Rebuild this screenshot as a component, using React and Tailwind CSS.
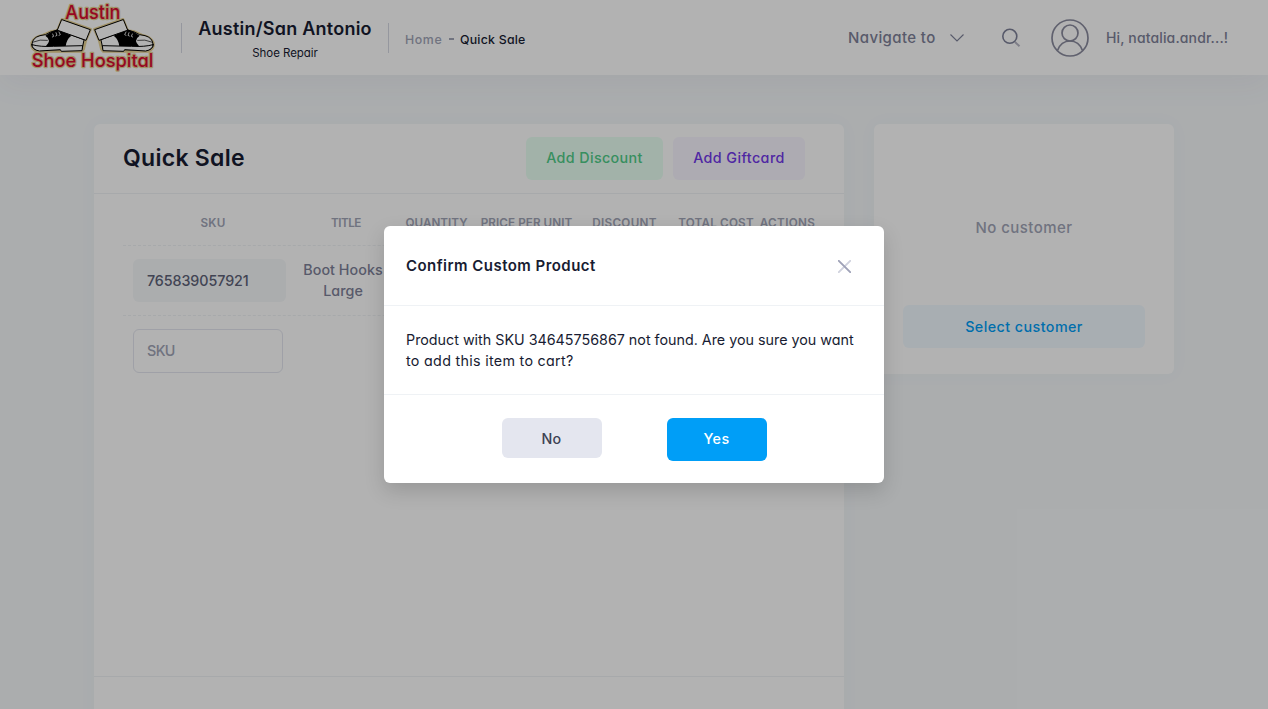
const HEADERS = [
  { label: "SKU", cls: "w-[180px] tracking-[0.2px]" },
  { label: "TITLE", cls: "w-[86px] tracking-[-0.52px]" },
  { label: "QUANTITY", cls: "w-[95px]" },
  { label: "PRICE PER UNIT", cls: "w-[85px] tracking-[0.06px]" },
  { label: "DISCOUNT", cls: "w-[111px] tracking-[0.32px]" },
  { label: "TOTAL COST", cls: "w-[72px] tracking-[0.2px]" },
  { label: "ACTIONS", cls: "w-[71px] tracking-[0.37px]" },
];

function Shoe() {
  return (
    <g strokeLinejoin="round" strokeLinecap="round">
      <path
        d="M126 58 L212 88 L197 122 L191 147 L186 154 L50 154 Q32 146 35 128 Q42 110 70 105 L92 95 L112 92 Z"
        fill="#e6d193"
        stroke="#e6d193"
        strokeWidth="8"
      />
      <path
        d="M112 90 L92 96 Q78 106 60 107 Q38 113 36 132 Q34 146 50 150 L186 148 L192 120 Z"
        fill="#fff"
        stroke="#000"
        strokeWidth="3"
      />
      <path d="M113 88 L92 97 L76 107 Q96 120 78 138 L137 139 Q139 118 154 107 Z" fill="#000" />
      <path d="M36 134 Q60 141 100 139 L188 137 L186 152 L124 154 L121 149 L58 153 Q36 149 36 134 Z" fill="#fff" stroke="#000" strokeWidth="3" />
      <path d="M40 126 Q60 117 82 121" fill="none" stroke="#000" strokeWidth="2" />
      <path d="M126 59 L211 89 L198 121 L113 91 Z" fill="#fff" stroke="#000" strokeWidth="3" />
      <path d="M98 102 l3 7 l-4 2 M108 98 l3 8 l-4 2 M117 96 l4 8 l-4 2" fill="none" stroke="#fff" strokeWidth="2.5" />
    </g>
  );
}

function Logo() {
  return (
    <svg className="h-[75px] w-[161px] shrink-0" viewBox="0 0 483 225">
      <Shoe />
      <g transform="translate(435 0) scale(-1 1)">
        <Shoe />
      </g>
      <g
        fontFamily="Inter, sans-serif"
        fontWeight="500"
        fill="#d80a32"
        stroke="#e6d193"
        strokeWidth="7"
        strokeLinejoin="round"
        paintOrder="stroke"
        style={{ fontFeatureSettings: '"cv11"' }}
      >
        <text x="136" y="56" fontSize="56" textLength="165" lengthAdjust="spacingAndGlyphs">Austin</text>
        <text x="35" y="201" fontSize="55" textLength="365" lengthAdjust="spacingAndGlyphs">Shoe Hospital</text>
      </g>
    </svg>
  );
}

function Header() {
  return (
    <header className="relative flex h-[75px] w-full shrink-0 items-start bg-white pl-5 shadow-[0_10px_30px_0_rgba(82,63,105,0.05)]">
      <Logo />
      <div className="mt-[23px] h-[30px] w-px bg-[#d6d8e2]" />
      <div className="flex w-[206px] flex-col items-center pt-[17px]">
        <div className="text-[18px] leading-6 font-semibold tracking-[0.24px] whitespace-nowrap">Austin/San Antonio</div>
        <div className="mt-[3px] text-[11.5px] leading-[18px] tracking-[-0.06px]">Shoe Repair</div>
      </div>
      <div className="mt-[23px] h-[30px] w-px bg-[#d6d8e2]" />
      <div className="flex pt-[31px] pl-4 text-[12.35px] leading-[18px] font-medium whitespace-nowrap">
        <span className="w-[44px] tracking-[0.6px] text-[#a1a5b7]">Home</span>
        <span className="mt-[7px] mr-[6px] h-[2px] w-[5px] bg-[#a1a5b7]" />
        <span className="tracking-[0.23px]">Quick Sale</span>
      </div>
      <div className="ml-auto flex h-[75px] w-[420px] shrink-0 items-center text-[#5e6278]">
        <span className="w-[102px] pt-[2px] text-[15px] font-medium tracking-[0.39px] whitespace-nowrap text-[#7e8299]">Navigate to</span>
        <svg className="h-2 w-[14px]" viewBox="0 0 14 8" fill="none" stroke="#7e8299" strokeWidth="1.1">
          <path d="M0.5 0.5 L7 7 L13.5 0.5" />
        </svg>
        <svg className="ml-[37px] h-5 w-5" viewBox="0 0 20 20" fill="none">
          <path d="M14 14 L18.5 18.3" stroke="#b5b5c3" strokeWidth="1.9" />
          <circle cx="8.8" cy="8.3" r="7" stroke="#7e8299" strokeWidth="1.6" />
        </svg>
        <svg className="ml-[30px] h-[38px] w-[38px]" viewBox="0 0 38 38" fill="none" stroke="#8a8b9e" strokeWidth="1.7">
          <circle cx="19" cy="19" r="18" />
          <circle cx="19" cy="14" r="8" />
          <path d="M6.5 31.5 Q10 22 19 22 Q28 22 31.5 31.5" />
        </svg>
        <span className="ml-[17px] text-[14px] font-medium tracking-[0.14px] whitespace-nowrap text-[#7e8299]">Hi, natalia.andr...!</span>
      </div>
    </header>
  );
}

function SaleCard() {
  return (
    <section className="flex h-[640px] w-[750px] shrink-0 flex-col rounded-md bg-white shadow-[0_0_20px_0_rgba(76,87,125,0.03)]">
      <div className="flex h-[70px] shrink-0 items-start border-b border-[#eff2f5] pt-[13px] pr-[39px] pl-[29px]">
        <h1 className="mt-[3px] text-[23px] leading-9 font-semibold tracking-[0.28px]">Quick Sale</h1>
        <button className="ml-auto h-[43px] w-[137px] rounded-md bg-[#e8fff3] pb-[2px] text-[14.3px] font-medium tracking-[0.38px] text-[#50cd89]">Add Discount</button>
        <button className="ml-[10px] h-[43px] w-[132px] rounded-md bg-[#f8f5ff] pb-[2px] text-[14.3px] font-medium tracking-[0.42px] text-[#7239ea]">Add Giftcard</button>
      </div>
      <div className="flex-1 overflow-hidden pl-[29px]">
        <div className="flex h-[52px] w-[692px] items-center border-b border-dashed border-[#eff2f5] pt-2 text-[11.7px] font-semibold text-[#a1a5b7]">
          {HEADERS.map((h) => (
            <div key={h.label} className={"flex shrink-0 justify-center whitespace-nowrap " + h.cls}>{h.label}</div>
          ))}
        </div>
        <div className="flex h-[70px] w-[692px] items-start border-b border-dashed border-[#eff2f5] pt-[13px] pl-[10px]">
          <div className="flex h-[43px] w-[153px] items-center rounded-md bg-[#f5f8fa] pl-[14px] text-[14.3px] font-medium tracking-[-0.08px] text-[#5e6278]">765839057921</div>
          <div className="ml-[14px] w-[86px] text-center text-[14.3px] leading-[21px] font-medium tracking-[0.05px] whitespace-nowrap text-[#7e8299]">
            Boot Hooks<br />Large
          </div>
        </div>
        <div className="pt-[13px] pl-[10px]">
          <div className="flex h-[44px] w-[150px] items-center rounded-md border border-[#e4e6ef] pl-[13px] text-[14.3px] font-medium tracking-[-0.6px] text-[#a1a5b7]">SKU</div>
        </div>
      </div>
      <div className="h-[88px] shrink-0 border-t border-[#eff2f5]" />
    </section>
  );
}

function CustomerCard() {
  return (
    <section className="flex h-[250px] w-[300px] shrink-0 flex-col items-center rounded-md bg-white px-[29px] pt-[92px] shadow-[0_0_20px_0_rgba(76,87,125,0.03)]">
      <p className="text-[15px] leading-6 font-medium tracking-[0.46px] text-[#a1a5b7]">No customer</p>
      <button className="mt-[65px] h-[43px] w-full rounded-md bg-[#f1faff] text-[14.3px] font-medium tracking-[0.44px] text-[#009ef7]">Select customer</button>
    </section>
  );
}

function ConfirmDialog() {
  return (
    <div role="dialog" className="flex h-[257px] w-[500px] flex-col rounded-md bg-white shadow-[0_8px_20px_0_rgba(0,0,0,0.15)]">
      <div className="flex h-[80px] shrink-0 items-center justify-between border-b border-[#eff2f5] pr-[33px] pl-[22px]">
        <h2 className="pt-[2px] text-[15px] font-semibold tracking-[0.46px]">Confirm Custom Product</h2>
        <svg className="mt-[2px] h-[13px] w-[13px]" viewBox="0 0 13 13" fill="none" strokeWidth="1.9" strokeLinecap="round">
          <path d="M0.8 12.2 L12.2 0.8" stroke="#d0d2de" />
          <path d="M0.8 0.8 L12.2 12.2" stroke="#9fa2b8" />
        </svg>
      </div>
      <div className="h-[89px] shrink-0 border-b border-[#eff2f5] pt-[23px] pl-[22px] text-[14.3px] leading-[21px] whitespace-nowrap">
        <p>Product with SKU 34645756867 not found. Are you sure you want</p>
        <p className="tracking-[0.3px]">to add this item to cart?</p>
      </div>
      <div className="flex items-start justify-center gap-[65px] pt-[23px] text-[14.3px] font-medium">
        <button className="h-10 w-[100px] rounded-md bg-[#e4e6ef] pt-[2px] tracking-[0.36px] text-[#3f4254]">No</button>
        <button className="h-[43px] w-[100px] rounded-md bg-[#009ef7] pb-[2px] tracking-[0.47px] text-white">Yes</button>
      </div>
    </div>
  );
}

export default function App() {
  return (
    <div className="relative flex h-screen w-full flex-col overflow-hidden bg-[#f5f8fa] font-['Inter',sans-serif] text-[#181c32] [font-feature-settings:'cv11']">
      <Header />
      <main className="flex items-start gap-[30px] pt-[49px] pl-[94px]">
        <SaleCard />
        <CustomerCard />
      </main>
      <div className="absolute inset-0 flex items-center justify-center bg-black/30">
        <ConfirmDialog />
      </div>
    </div>
  );
}
